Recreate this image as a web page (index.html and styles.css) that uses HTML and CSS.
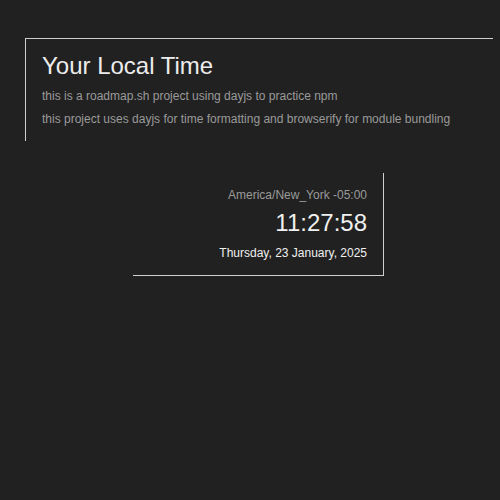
FILE: index.html
```html
<!DOCTYPE html>
<html lang="en">
<head>
<meta charset="utf-8">
<title>Your Local Time</title>
<link rel="stylesheet" href="styles.css">
</head>
<body>
  <header class="intro">
    <h1 class="title">Your Local Time</h1>
    <p class="desc">this is a roadmap.sh project using dayjs to practice npm</p>
    <p class="desc">this project uses dayjs for time formatting and browserify for module bundling</p>
  </header>
  <section class="clock">
    <p class="zone">America/New_York -05:00</p>
    <p class="time">11:27:58</p>
    <p class="date">Thursday, 23 January, 2025</p>
  </section>
</body>
</html>
```
FILE: styles.css
```css
html, body {
  margin: 0;
  padding: 0;
  background: #212121;
  font-family: "Liberation Sans", Arial, sans-serif;
  color: #e6e6e6;
}

body {
  padding-top: 38px;
}

.intro {
  margin-left: 25px;
  width: 435px;
  border-top: 1px solid #cfcfcf;
  border-left: 1px solid #cfcfcf;
  padding: 13px 16px 10px 16px;
}

.title {
  margin: 0 0 5px 0;
  font-size: 24px;
  font-weight: normal;
  color: #ececec;
  line-height: 28px;
}

.desc {
  margin: 0;
  font-size: 12px;
  line-height: 23px;
  color: #9a9a9a;
}

.clock {
  margin: 32px 0 0 133px;
  width: 234px;
  border-right: 1px solid #cfcfcf;
  border-bottom: 1px solid #cfcfcf;
  padding: 13px 16px 14px 0;
  text-align: right;
}

.zone {
  margin: 0;
  font-size: 12px;
  line-height: 18px;
  color: #9a9a9a;
}

.time {
  margin: 4px 0 0 0;
  font-size: 24px;
  line-height: 30px;
  color: #f0f0f0;
}

.date {
  margin: 7px 0 0 0;
  font-size: 12px;
  line-height: 16px;
  color: #f0f0f0;
}
```
